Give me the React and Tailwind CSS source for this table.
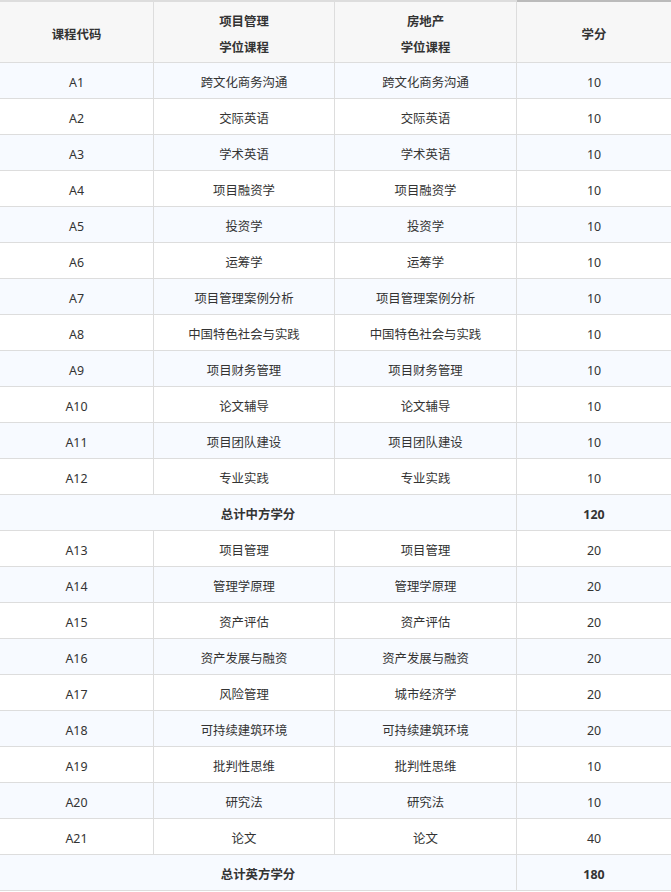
import React from "react";

const rows1 = [
  ["A1", "跨文化商务沟通", "跨文化商务沟通", "10"],
  ["A2", "交际英语", "交际英语", "10"],
  ["A3", "学术英语", "学术英语", "10"],
  ["A4", "项目融资学", "项目融资学", "10"],
  ["A5", "投资学", "投资学", "10"],
  ["A6", "运筹学", "运筹学", "10"],
  ["A7", "项目管理案例分析", "项目管理案例分析", "10"],
  ["A8", "中国特色社会与实践", "中国特色社会与实践", "10"],
  ["A9", "项目财务管理", "项目财务管理", "10"],
  ["A10", "论文辅导", "论文辅导", "10"],
  ["A11", "项目团队建设", "项目团队建设", "10"],
  ["A12", "专业实践", "专业实践", "10"],
];
const rows2 = [
  ["A13", "项目管理", "项目管理", "20"],
  ["A14", "管理学原理", "管理学原理", "20"],
  ["A15", "资产评估", "资产评估", "20"],
  ["A16", "资产发展与融资", "资产发展与融资", "20"],
  ["A17", "风险管理", "城市经济学", "20"],
  ["A18", "可持续建筑环境", "可持续建筑环境", "20"],
  ["A19", "批判性思维", "批判性思维", "10"],
  ["A20", "研究法", "研究法", "10"],
  ["A21", "论文", "论文", "40"],
];

const all = [
  ...rows1.map((r) => ({ type: "row", r })),
  { type: "total", label: "总计中方学分", value: "120" },
  ...rows2.map((r) => ({ type: "row", r })),
  { type: "total", label: "总计英方学分", value: "180" },
];

const cell =
  "flex items-center justify-center h-[36px] pt-[6px] border-b border-[#dddddd] text-center";
const head =
  "flex flex-col items-center justify-center h-[63px] pt-[6px] border-t-2 border-b border-b-[#dddddd] bg-[#f7f7f7] font-bold leading-[26px]";

export default function App() {
  return (
    <div
      className="w-[671px] bg-white text-[12.4px] text-[#333333]"
      style={{ fontFamily: '"Noto Sans", "Noto Sans CJK SC", sans-serif' }}
    >
      <div className="grid grid-cols-[154px_181px_182px_154px]">
        <div className={`${head} border-t-[#dddddd] border-r border-r-[#dddddd]`}>
          课程代码
        </div>
        <div className={`${head} border-t-[#dddddd] border-r border-r-[#dddddd]`}>
          <span>项目管理</span>
          <span>学位课程</span>
        </div>
        <div className={`${head} border-t-[#dddddd] border-r border-r-[#dddddd]`}>
          <span>房地产</span>
          <span>学位课程</span>
        </div>
        <div className={`${head} border-t-[#bbbbbb]`}>学分</div>
        {all.map((item, i) => {
          const bg = i % 2 === 0 ? "bg-[#f7faff]" : "bg-white";
          if (item.type === "total") {
            return (
              <React.Fragment key={i}>
                <div className={`${cell} ${bg} col-span-3 border-r font-bold`}>
                  {item.label}
                </div>
                <div className={`${cell} ${bg} font-bold`}>{item.value}</div>
              </React.Fragment>
            );
          }
          const [a, b, c, d] = item.r;
          return (
            <React.Fragment key={i}>
              <div className={`${cell} ${bg} border-r`}>{a}</div>
              <div className={`${cell} ${bg} border-r`}>{b}</div>
              <div className={`${cell} ${bg} border-r`}>{c}</div>
              <div className={`${cell} ${bg}`}>{d}</div>
            </React.Fragment>
          );
        })}
      </div>
    </div>
  );
}
